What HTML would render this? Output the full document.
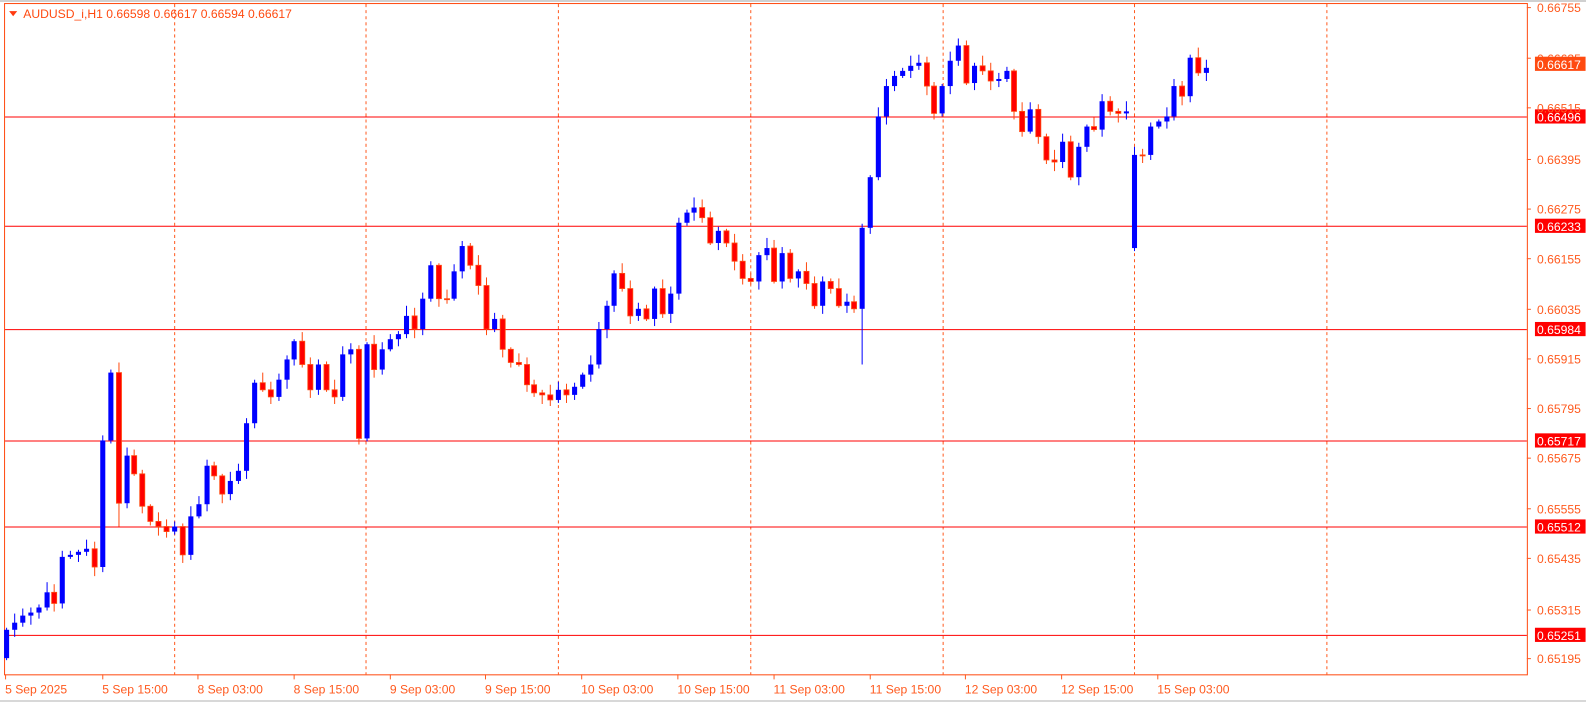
<!DOCTYPE html>
<html><head><meta charset="utf-8"><style>
html,body{margin:0;padding:0;background:#fff;width:1586px;height:703px;overflow:hidden}
svg{display:block;width:1586px;height:703px}
text{font-family:"Liberation Sans","DejaVu Sans",sans-serif;font-size:12px}
</style></head><body>
<svg id="s" width="1586" height="703" viewBox="0 0 1586 703" xmlns="http://www.w3.org/2000/svg">
<rect x="0" y="0" width="1586" height="703" fill="#fff"/>
<line x1="0" y1="1" x2="1586" y2="1" stroke="#a0a0a0"/>
<line x1="0" y1="701" x2="1586" y2="701" stroke="#d8d8d8" stroke-width="2"/>
<g transform="scale(1.0125,1.0125)">
<rect x="4.5" y="3.5" width="1504" height="663" fill="none" stroke="#ff4a10"/>
<g id="grid" stroke="#ff5a1f" stroke-dasharray="3,3"></g>
<g id="hl" stroke="#ff0000"></g>
<g id="c"></g>
<g id="ax" fill="#ff5a1f"></g>
<path d="M9 11 L17 11 L13 16 Z" fill="#ff3a10"/>
<text x="23" y="18" fill="#ff4a10">AUDUSD_i,H1  0.66598 0.66617 0.66594 0.66617</text>
</g>
</svg>
<script>
(function(){
var NS="http://www.w3.org/2000/svg";
function el(p,t,a,txt){var e=document.createElementNS(NS,t);for(var k in a)e.setAttribute(k,a[k]);if(txt!=null)e.textContent=txt;document.getElementById(p).appendChild(e);return e;}
[172,361,551,741,931,1120,1310].forEach(function(x){el("grid","line",{x1:x+.5,y1:4,x2:x+.5,y2:666});});
[[115,"0.66496"],[223,"0.66233"],[325,"0.65984"],[435,"0.65717"],[520,"0.65512"],[627,"0.65251"]].forEach(function(h){
 el("hl","line",{x1:5,y1:h[0]+.5,x2:1508,y2:h[0]+.5});
 el("ax","rect",{x:1516,y:h[0]-7,width:50,height:14,fill:"#ff0000"});
 el("ax","text",{x:1518,y:h[0]+5,fill:"#fff"},h[1]);
});
var lv=[[7,"0.66755"],[57,"0.66635"],[106,"0.66515"],[157,"0.66395"],[206,"0.66275"],[255,"0.66155"],[305,"0.66035"],[354,"0.65915"],[403,"0.65795"],[452,"0.65675"],[502,"0.65555"],[551,"0.65435"],[602,"0.65315"],[650,"0.65195"]];
lv.forEach(function(l){el("ax","line",{x1:1508,y1:l[0]+.5,x2:1512,y2:l[0]+.5,stroke:"#ff5a1f"});el("ax","text",{x:1518,y:l[0]+5},l[1]);});
el("ax","rect",{x:1516,y:56,width:50,height:14,fill:"#ff4a10"});
el("ax","text",{x:1518,y:68,fill:"#fff"},"0.66617");
var tl=[[5,"5 Sep 2025"],[101,"5 Sep 15:00"],[195,"8 Sep 03:00"],[290,"8 Sep 15:00"],[385,"9 Sep 03:00"],[479,"9 Sep 15:00"],[574,"10 Sep 03:00"],[669,"10 Sep 15:00"],[764,"11 Sep 03:00"],[859,"11 Sep 15:00"],[953,"12 Sep 03:00"],[1048,"12 Sep 15:00"],[1143,"15 Sep 03:00"]];
tl.forEach(function(t){el("ax","line",{x1:t[0]+.5,y1:666,x2:t[0]+.5,y2:671,stroke:"#ff5a1f"});el("ax","text",{x:t[0],y:685},t[1]);});
var cl=[622,615,608,605,600,585,596,550,548,545,542,560,435,368,497,450,468,500,515,520,525,520,548,510,498,460,470,488,475,465,418,378,385,392,375,355,337,360,385,360,385,392,350,345,433,340,365,345,335,330,312,325,295,262,295,295,268,243,262,282,325,315,345,358,360,380,388,390,395,385,390,382,370,360,325,302,270,285,312,305,315,285,310,290,220,210,205,215,240,228,240,258,275,278,252,245,278,250,275,268,280,302,278,285,302,298,305,225,175,115,85,75,70,65,62,85,112,85,60,45,82,65,70,80,78,70,110,130,108,135,158,160,140,175,145,125,128,100,110,112,110,245,153,125,120,115,85,95,57,72,67];
var op=650;
for(var i=0;i<cl.length;i++){
 var x=Math.round(6+i*7.9)+.5,c=cl[i],o=op;if(i==141){o=245;c=153;}
 var up=c<o,col=up?"#0000ff":"#ff0000";
 var tp=Math.min(o,c),bt=Math.max(o,c);
 var h1=tp-2-((i*7)%9),l1=bt+2+((i*5)%8);
 if(i==107)l1=360;if(i==12)l1=565;if(i==14)l1=520;
 el("c","line",{x1:x,y1:h1,x2:x,y2:l1,stroke:up?col:"#ff4a10"});
 el("c","rect",{x:x-2.5,y:tp,width:5,height:Math.max(1,bt-tp),fill:col,stroke:up?"none":"#ff4a10","stroke-width":up?0:0.8});
 op=c;
}
})();
</script>
</body></html>
